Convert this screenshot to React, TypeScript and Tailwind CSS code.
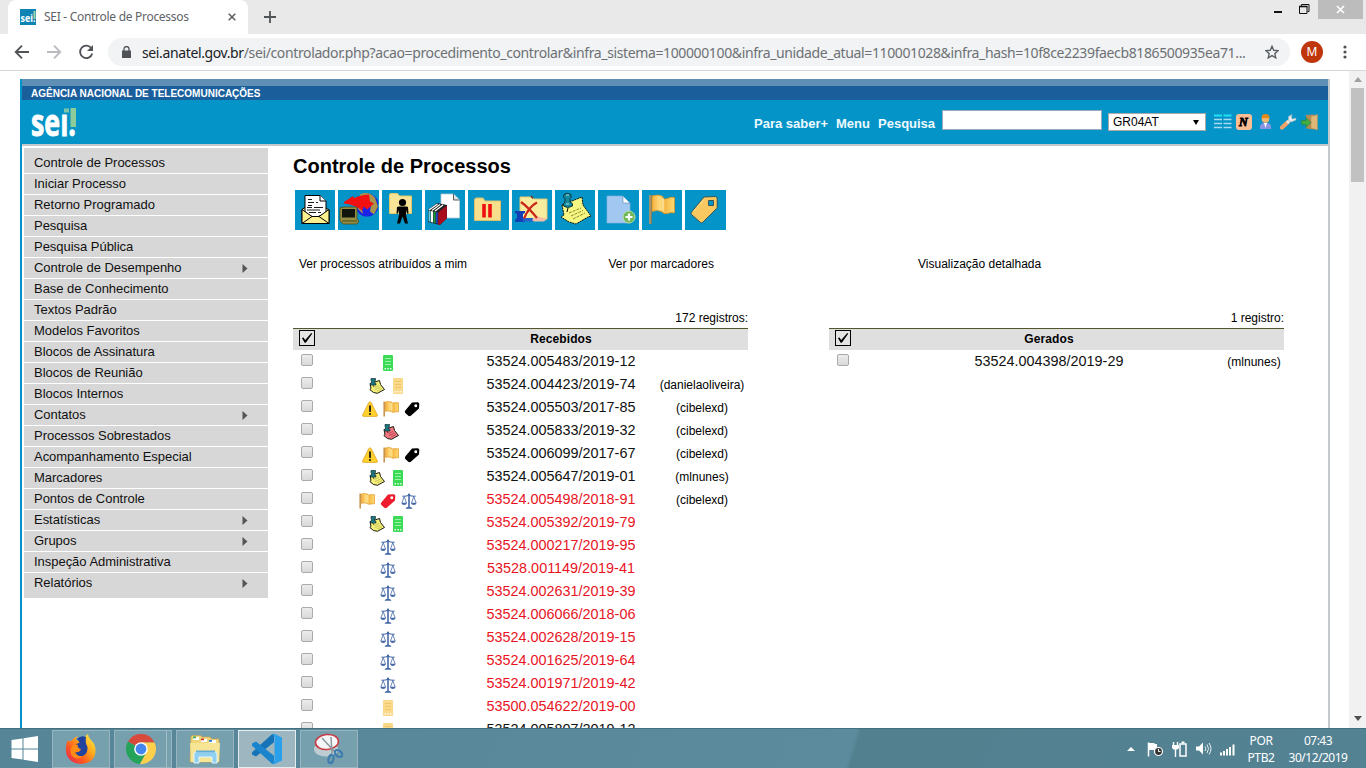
import React from "react";

const MENU: [string, boolean?][] = [
  ["Controle de Processos"],
  ["Iniciar Processo"],
  ["Retorno Programado"],
  ["Pesquisa"],
  ["Pesquisa Pública"],
  ["Controle de Desempenho", true],
  ["Base de Conhecimento"],
  ["Textos Padrão"],
  ["Modelos Favoritos"],
  ["Blocos de Assinatura"],
  ["Blocos de Reunião"],
  ["Blocos Internos"],
  ["Contatos", true],
  ["Processos Sobrestados"],
  ["Acompanhamento Especial"],
  ["Marcadores"],
  ["Pontos de Controle"],
  ["Estatísticas", true],
  ["Grupos", true],
  ["Inspeção Administrativa"],
  ["Relatórios", true],
];

type IconName = "phone" | "phoneY" | "note" | "noteR" | "warn" | "flag" | "tag" | "tagR" | "scale";
type Row = { n: string; icons: IconName[]; user?: string; red?: boolean; shift?: boolean };

const ROWS: Row[] = [
  { n: "53524.005483/2019-12", icons: ["phone"] },
  { n: "53524.004423/2019-74", icons: ["note", "phoneY"], user: "(danielaoliveira)" },
  { n: "53524.005503/2017-85", icons: ["warn", "flag", "tag"], user: "(cibelexd)", shift: true },
  { n: "53524.005833/2019-32", icons: ["noteR"], user: "(cibelexd)", shift: true },
  { n: "53524.006099/2017-67", icons: ["warn", "flag", "tag"], user: "(cibelexd)", shift: true },
  { n: "53524.005647/2019-01", icons: ["note", "phone"], user: "(mlnunes)" },
  { n: "53524.005498/2018-91", icons: ["flag", "tagR", "scale"], user: "(cibelexd)", red: true },
  { n: "53524.005392/2019-79", icons: ["note", "phone"], red: true },
  { n: "53524.000217/2019-95", icons: ["scale"], red: true },
  { n: "53528.001149/2019-41", icons: ["scale"], red: true },
  { n: "53524.002631/2019-39", icons: ["scale"], red: true },
  { n: "53524.006066/2018-06", icons: ["scale"], red: true },
  { n: "53524.002628/2019-15", icons: ["scale"], red: true },
  { n: "53524.001625/2019-64", icons: ["scale"], red: true },
  { n: "53524.001971/2019-42", icons: ["scale"], red: true },
  { n: "53500.054622/2019-00", icons: ["phoneY"], red: true },
  { n: "53524.005807/2019-12", icons: ["phoneY"] },
];

function Phone({ c, d }: { c: string; d: string }) {
  return (
    <svg width="16" height="16" viewBox="0 0 16 16">
      <rect x="3" y="0" width="10" height="16" rx="1" fill={c} />
      <path d="M5 3.500h6M5 6.500h6M5 9.500h6" stroke={d} strokeWidth="1" />
      <path d="M4.500 13h1.500v1.500h-1.500zM7.300 13h1.500v1.500h-1.500zM10 13h1.500v1.500h-1.500z" fill="#fff" opacity=".85" />
    </svg>
  );
}

function Note({ c, line }: { c: string; line: string }) {
  return (
    <svg width="16" height="16" viewBox="0 0 16 16">
      <path d="M1 5.500L10.500 2.500 11.500 6.500 15.500 11.500 13 12.800 8.500 15.300 4.500 14.500 .8 11.500 2 10.500z" fill={c} stroke="#1a1a10" strokeWidth="1" />
      <path d="M5.500 9.500l4.500-2M6 11.500l5.500-2.500M8 13l5-2.500" stroke={line} strokeWidth=".6" />
      <path d="M2 .5h4.500v2L5.500 3v1.500L7 5.500V7H1.500V5.500l1-1V3L2 2.500z" fill="#1d7580" stroke="#0b3035" strokeWidth=".7" />
      <path d="M4 7l1 2" stroke="#222" strokeWidth=".8" />
    </svg>
  );
}

function Tag({ c }: { c: string }) {
  return (
    <svg width="16" height="16" viewBox="0 0 16 16">
      <path fillRule="evenodd" d="M8 1.500l5.500-.3q1.800 0 1.800 1.600L15 7.500 6.800 14.800q-1.300.9-2.500 0L1.300 12q-1-1.300 0-2.500zM11.700 3.200a1.500 1.500 0 1 0 .1 3 1.500 1.500 0 0 0-.1-3z" fill={c} />
    </svg>
  );
}

function Flag() {
  return (
    <svg width="16" height="16" viewBox="0 0 16 16">
      <defs>
        <linearGradient id="fl" x1="0" x2="1">
          <stop offset="0" stopColor="#f5b03c" />
          <stop offset=".35" stopColor="#ffdc80" />
          <stop offset=".6" stopColor="#f6ba48" />
          <stop offset="1" stopColor="#ffdb72" />
        </linearGradient>
      </defs>
      <path d="M1.200.5v15" stroke="#c9954f" strokeWidth="1.600" />
      <path d="M2.500 1q3-1 6 0v1q3.500-.5 7-.2v9q-3.500-.3-5 .5-1.200.3-2.500-1-2.500-.8-5.500 0z" fill="url(#fl)" stroke="#e29f33" strokeWidth=".8" />
      <path d="M8.800 2v7.500" stroke="#fff0b8" strokeWidth=".7" />
    </svg>
  );
}

function Warn() {
  return (
    <svg width="16" height="16" viewBox="0 0 16 16">
      <path d="M8 .8q.8 0 1.300 1L15.400 14q.4 1.300-.8 1.400h-13.200Q.2 15.300.6 14L6.700 1.800Q7.200.8 8 .8z" fill="#ffd02e" stroke="#dfa628" strokeWidth=".8" />
      <path d="M8 5v5.200" stroke="#111" strokeWidth="1.700" strokeLinecap="round" />
      <circle cx="8" cy="12.900" r="1" fill="#111" />
    </svg>
  );
}

function Scale() {
  return (
    <svg width="16" height="16" viewBox="0 0 16 16" fill="none" stroke="#4468a6">
      <path d="M1.500 3.200Q5 3.500 8 2.200q3 1.300 6.500 1" strokeWidth="1.200" />
      <path d="M8 1v13" strokeWidth="1.600" />
      <circle cx="8" cy="1.600" r="1.100" fill="#4468a6" stroke="none" />
      <path d="M3.200 3.500L.9 10M3.200 3.500L5.500 10M12.800 3.500L10.500 10M12.800 3.500L15.100 10" strokeWidth=".8" />
      <path d="M.3 9.800h5.800q-.6 2.200-2.900 2.200T.3 9.800zM9.900 9.800h5.800q-.6 2.200-2.900 2.200T9.900 9.800zM4.500 15.700q.5-1.700 3.500-1.900 3 .2 3.500 1.900z" fill="#4468a6" stroke="none" />
    </svg>
  );
}

function RowIcon({ name }: { name: IconName }) {
  switch (name) {
    case "phone": return <Phone c="#3cdb55" d="#9df2a8" />;
    case "phoneY": return <Phone c="#fbd98a" d="#f1c56a" />;
    case "note": return <Note c="#f3ee78" line="#b3ad48" />;
    case "noteR": return <Note c="#f27884" line="#8e2833" />;
    case "warn": return <Warn />;
    case "flag": return <Flag />;
    case "tag": return <Tag c="#000" />;
    case "tagR": return <Tag c="#ec1c2c" />;
    case "scale": return <Scale />;
  }
}

const TOOLS: { w: string; art: React.ReactNode }[] = [
  {
    w: "w-[40px] mr-[3px]",
    art: (
      <>
        <path d="M7 19.500l5-3.500h16l6 4v13.500H7z" fill="#fbf08f" stroke="#000" />
        <path d="M10 23V5.500h15l6 5.500v12L20 28z" fill="#fff" stroke="#000" />
        <path d="M25 5.500V11h6" fill="#fff" stroke="#000" />
        <path d="M13 9.500h4M13 12.500h6m2 0h2M13 15.500h4M12 17.500h5m2 0h9M12 20h13M14 22.500h7m2 0h3" stroke="#000" strokeWidth=".9" />
        <path d="M7 19.500l10 7h7l10-7v14H7z" fill="#fbf08f" stroke="#000" />
        <path d="M7 33.500l10-7m17 7l-10-7" stroke="#000" />
      </>
    ),
  },
  {
    w: "w-[41px] mr-[3px]",
    art: (
      <>
        <circle cx="29" cy="15" r="11.500" fill="#1c22e8" />
        <path d="M22 4.500q8-4 15 3l3 9-4 8-4-3 1-6-4-6-7-1zM18 12l5 3 2 9-5-5z" fill="#a9924a" />
        <path d="M6 12l9-6 1 2q6-3 15-3.500l1 7 4 2-7 6-3-3-2 4q-8-6-18-7z" fill="#f31010" />
        <path d="M2 18l4-1h13v12l2 2-2 3H5l-3-3z" fill="#948e42" stroke="#4b491c" strokeWidth=".8" />
        <path d="M4 19h13v8.500H4z" fill="#11140c" />
        <path d="M4 31h15" stroke="#4b491c" />
      </>
    ),
  },
  {
    w: "w-[40px] mr-[3px]",
    art: (
      <>
        <path d="M7.500 5q0-1.500 1.500-1.500h6.500l2 2.500h12v17.500h-22z" fill="#f8e496" stroke="#e2c667" />
        <circle cx="20.500" cy="12.500" r="3.600" fill="#000" />
        <path d="M15 17l1.500-.5h8L26 17l.5 6.500h-1.500L24 20v5l2 8.500h-3l-2.500-7-2.500 7h-3l2-8.500v-5l-1 3.500h-1.500z" fill="#000" />
      </>
    ),
  },
  {
    w: "w-[40px] mr-[3px]",
    art: (
      <>
        <path d="M16 4h12.500l6 6v18H16z" fill="#fff" stroke="#b6cad3" strokeWidth=".8" />
        <path d="M28.500 4v6h6" fill="#dce3e6" stroke="#333" strokeWidth=".8" />
        <path d="M3 20l9-7 10 2v13l-7 7-12-3z" fill="#222" />
        <path d="M3.500 20.500l2 .4v11l-2-.6z" fill="#55d3ef" />
        <path d="M6 21l2 .4v11l-2-.5z" fill="#fff" />
        <path d="M8.500 21.500l2 .3v11.500l-2-.6z" fill="#1a9d44" />
        <path d="M11 22l1.800.3v11.500l-1.800-.5z" fill="#283ebc" />
        <path d="M13.300 22.500l8.500-7v13l-7 6.500-1.500-.500z" fill="#a90d1d" />
        <path d="M4 20l8.500-6M7 20.500l8-6M10 21l8-6" stroke="#fff" strokeWidth="1.200" />
      </>
    ),
  },
  {
    w: "w-[41px] mr-[3px]",
    art: (
      <>
        <path d="M6.500 10q0-2 2-2H15l2 3h15.500v19.500h-26z" fill="#f7df8b" stroke="#dcc16a" />
        <path d="M16 14v13.500M22 14v13.500" stroke="#ee1010" strokeWidth="3.600" />
      </>
    ),
  },
  {
    w: "w-[40px] mr-[3px]",
    art: (
      <>
        <path d="M8 7h12l2 2h13v20H8z" fill="#f8ec9e" stroke="#dfc978" />
        <path d="M19 6l2 2.500" stroke="#732d1d" strokeWidth="1.500" />
        <path d="M3 21h10v2l-2 1v4l2 2v2H3v-2l2-2v-4l-2-1z" fill="#1340b5" />
        <path d="M11 28h10v3.500H11z" fill="#2461cc" />
        <path d="M20 30l4-4 11 3-3 2.500H22z" fill="#f3bda7" />
        <path d="M9 12q7 5 16 16M25 12.500q-8 4-13 16" stroke="#c9261a" strokeWidth="2.200" fill="none" />
      </>
    ),
  },
  {
    w: "w-[40px] mr-[3px]",
    art: (
      <>
        <path d="M7 15L27 7l1 8 8 11-3 1-12 7-7-2-8-5 3-2z" fill="#f6f783" stroke="#000" strokeWidth=".9" strokeDasharray="2 .7" />
        <path d="M14 23l12-5M16 26l12-5.500M18 29l12-6" stroke="#8a8b2c" strokeDasharray="3 1" />
        <path d="M9 4.500q3-2.500 7 0v3l-1 1v3.500q3.500 1 2.500 4-5 3-9 0-1-3 1.500-4V8.500L8.500 7z" fill="#188a9d" stroke="#07333c" />
        <path d="M13 18l-1 4" stroke="#000" />
        <path d="M11 5h3M11 14h3" stroke="#98e2e8" />
      </>
    ),
  },
  {
    w: "w-[41px] mr-[3px]",
    art: (
      <>
        <path d="M9 6h16l7 7v20H9z" fill="#a2c8f1" stroke="#86b2e2" strokeWidth=".7" />
        <path d="M25 6v7h7z" fill="#fff" stroke="#5585b8" strokeWidth=".6" />
        <circle cx="31" cy="27" r="6" fill="#71b855" stroke="#b9dca7" strokeWidth="1" />
        <path d="M31 23.500v7M27.500 27h7" stroke="#fff" strokeWidth="2.200" />
      </>
    ),
  },
  {
    w: "w-[40px] mr-[3px]",
    art: (
      <>
        <path d="M8.500 5v29" stroke="#8a7752" strokeWidth="2.600" />
        <path d="M8 5v29" stroke="#c4ad7d" strokeWidth="1" />
        <path d="M10 6q6-2 11 .5v2q2 1 4.500 0 3.500-2 7-1V23q-3.500-1-7 .5-3.500 1-6-2-4-2-9.500 0z" fill="url(#fl)" stroke="#d9931e" strokeWidth=".8" />
        <path d="M21 8v12.500" stroke="#fff0b8" strokeWidth="1" />
      </>
    ),
  },
  {
    w: "w-[41px]",
    art: (
      <>
        <path fillRule="evenodd" d="M19 7L30.500 6.500l1.700 1.500V18L17.500 32.500q-1 .7-2 0L6.500 24.500q-1-1.300 0-2.500zM23.500 10.500h5v5h-5z" fill="#f9c860" stroke="#2c4b55" strokeWidth=".9" />
        <path d="M19 9.500l-10.500 12" stroke="#ffdf93" />
      </>
    ),
  },
];

function Checkbox() {
  return <span className="h-[12px] w-[12px] rounded-[2px] border border-[#aaaaaa] bg-linear-to-b from-[#ececec] to-[#d9d9d9]" />;
}

function HeadCheck() {
  return (
    <svg width="16" height="16" viewBox="0 0 16 16">
      <rect x=".5" y=".5" width="15" height="15" fill="#e4e4e4" stroke="#000" />
      <path d="M3 8.300l1.200-1 2 2.700L12.300 3l.9.700L6.800 12.700H5.700z" fill="#000" />
    </svg>
  );
}

function TaskButton({ active, stacked, children }: { active?: boolean; stacked?: boolean; children: React.ReactNode }) {
  return (
    <div
      className={
        "mr-[4px] flex h-[38px] w-[58px] items-center border " +
        (active ? "border-[#e4edf0] bg-[#9db6bf]" : "border-[#98b5bf] bg-[#76a0ae]")
      }
    >
      <div className={"flex h-full items-center justify-center " + (stacked ? "w-[52px] border-r border-[#a5bfc8]" : "w-full")}>{children}</div>
    </div>
  );
}

function Firefox() {
  return (
    <svg width="32" height="32" viewBox="0 0 32 32">
      <defs>
        <linearGradient id="ff" x1="1" y1="0" x2="0" y2="1">
          <stop offset="0" stopColor="#fff14f" />
          <stop offset=".35" stopColor="#ffb01f" />
          <stop offset=".65" stopColor="#ff5a1f" />
          <stop offset="1" stopColor="#e5195f" />
        </linearGradient>
      </defs>
      <path d="M3 7q1 2 3 1 3-4 7-5-2 2-2 4 6 0 7 3 0-6 5-9 0 3 3 6 5 5 4.500 11Q30 30 16 31 3 30 1 19 .5 12 3 7z" fill="url(#ff)" />
      <path d="M12 6q4-4 9-2-1 6 1.500 10 .5 7-5 9-6 1-8-4 4 1 6-2-5 0-5-4 1-3 4-3-1-3-2.500-4z" fill="#20439d" />
      <path d="M7 13q3-2 6-1-1 3 3 4-2 4-6 3 2 5 8 4-6 5-11 0-3-5 0-10z" fill="#ff8a16" />
    </svg>
  );
}

function Chrome() {
  return (
    <svg width="30" height="30" viewBox="0 0 30 30">
      <path d="M15 15L2 7.500A15 15 0 0 1 28 7.500L28.500 8.500H15z" fill="#d94a3d" />
      <path d="M2 7.500A15 15 0 0 0 14 30l6.500-11.800L15 15z" fill="#25a35a" />
      <path d="M28.500 8.500A15 15 0 0 1 14 30l6.500-11.800L15 8.500z" fill="#fcd04b" />
      <circle cx="15" cy="15" r="6.800" fill="#fff" />
      <circle cx="15" cy="15" r="5.400" fill="#4585ee" />
    </svg>
  );
}

function Explorer() {
  return (
    <svg width="34" height="30" viewBox="0 0 34 30">
      <path d="M3 3q0-1.500 1.500-1.500h8L14 3h8l1.500 2H31v23H2z" fill="#f0d67a" stroke="#c6a54c" strokeWidth=".7" />
      <path d="M5 3h6v3H5zM13 5h6v3h-6zM21 6h7v3h-7z" fill="#fff" />
      <path d="M5 2.500h3v1.800H5z" fill="#34a853" />
      <path d="M13 4.500h3v1.800h-3z" fill="#cf3e30" />
      <path d="M21 6h3v1.800h-3z" fill="#3178c6" />
      <path d="M2 9h30l-1 19H3z" fill="#f7e596" />
      <path d="M6 29v-9q0-2 2-2h19q2 0 2 2v9h-5v-6H11v6z" fill="#8fd0f0" stroke="#e3f5fd" />
      <path d="M8 17.500h19" stroke="#62aed6" strokeWidth="2" />
    </svg>
  );
}

function VsCode() {
  return (
    <svg width="32" height="32" viewBox="0 0 32 32">
      <path d="M23 .8v8.500L5 23.500 1 21.500v-2.200L21 1.200z" fill="#1673b8" />
      <path d="M23 31.200v-8.500L5 8.500 1 10.500v2.200L21 30.800z" fill="#1a84cd" />
      <path d="M23 .8L31 4.500v23l-8 3.700-1.500-.5L23.500 28V4l-2-2.700z" fill="#2ba0ea" />
    </svg>
  );
}

function Snip() {
  return (
    <svg width="32" height="32" viewBox="0 0 32 32">
      <ellipse cx="14" cy="14" rx="12" ry="7.500" fill="#bfcdd3" transform="translate(-1 2)" />
      <ellipse cx="14" cy="9" rx="11.500" ry="7.500" fill="#f4f6f7" stroke="#c93a42" strokeWidth="1.600" transform="rotate(-6 14 9)" />
      <path d="M9 5l13 14M18 4l1 17" stroke="#8b989e" strokeWidth="1.500" />
      <ellipse cx="25.500" cy="20.500" rx="4.200" ry="2.800" fill="none" stroke="#3d7cae" strokeWidth="2.200" transform="rotate(40 25.500 20.500)" />
      <ellipse cx="18" cy="26" rx="2.400" ry="4.200" fill="none" stroke="#3d7cae" strokeWidth="2.200" transform="rotate(15 18 26)" />
    </svg>
  );
}

function Browser() {
  return (
    <header className="h-[71px] shrink-0 border-b border-[#d3d6da] bg-white font-['Noto_Sans',sans-serif]">
      <div className="flex h-[34px] bg-[#e9e9e9]">
        <div className="ml-[8px] flex h-[34px] w-[240px] items-center rounded-t-[8px] bg-white pl-[12px]">
          <svg className="shrink-0 overflow-visible" width="16" height="16" viewBox="0 0 16 16">
            <rect width="16" height="16" fill="#0f84b4" />
            <text x=".5" y="12.500" fontFamily="Open Sans" fontWeight="700" fontSize="11" fill="#fff" textLength="15" lengthAdjust="spacingAndGlyphs">sei.</text>
            <path d="M13.500 2h2v8h-2z" fill="#9fd3a8" />
          </svg>
          <span className="ml-[8px] w-[176px] text-[12px] tracking-[-0.29px] whitespace-nowrap text-[#5f6368]">SEI - Controle de Processos</span>
          <svg className="ml-[8px]" width="8" height="8" viewBox="0 0 9 9">
            <path d="M.8.8l7.400 7.400M8.200.8L.8 8.200" stroke="#5a5e63" strokeWidth="1.700" />
          </svg>
        </div>
        <svg className="mt-[11px] ml-[16px]" width="12" height="12" viewBox="0 0 12 12">
          <path d="M6 0v12M0 6h12" stroke="#505357" strokeWidth="1.800" />
        </svg>
        <div className="ml-auto flex pr-[3px]">
          <svg width="40" height="20" viewBox="0 0 40 20">
            <path d="M0 11h8v2H0z" fill="#111" />
            <path d="M27.500 6V4.500h7.500v7h-1.500M25.500 6.500h7.500v7h-7.500z" fill="none" stroke="#111" strokeWidth="1" />
            <path d="M25 6.500h8.500" stroke="#111" strokeWidth="1.600" />
          </svg>
          <div className="ml-[4px] flex h-[19px] w-[45px] items-center justify-center bg-[#bcbcbc]">
            <svg width="9" height="9" viewBox="0 0 9 9">
              <path d="M1 1l7 7M8 1L1 8" stroke="#fff" strokeWidth="1.700" />
            </svg>
          </div>
        </div>
      </div>
      <div className="flex h-[36px] items-center pl-[14px]">
        <svg className="shrink-0" width="80" height="16" viewBox="0 0 80 16" fill="none" strokeWidth="1.800">
          <path d="M15 8H2M8 1.700L1.700 8 8 14.300" stroke="#505357" />
          <path d="M33 8h13M40 1.700L46.300 8 40 14.300" stroke="#b9bbbe" />
          <path d="M77.500 4.500A6.200 6.200 0 1 0 78.300 9.500" stroke="#505357" />
          <path d="M79 1v6h-6z" fill="#505357" />
        </svg>
        <div className="ml-[14px] flex h-[28px] w-[1182px] shrink-0 items-center rounded-full bg-[#f1f3f4] pl-[14px]">
          <svg className="shrink-0" width="9" height="12" viewBox="0 0 9 12">
            <path d="M0 4.500h9V12H0z" fill="#4f5357" />
            <path d="M2 5V3a2.500 2.500 0 0 1 5 0v2" fill="none" stroke="#4f5357" strokeWidth="1.300" />
          </svg>
          <span className="ml-[11px] w-[1110px] shrink-0 text-[14px] tracking-[-0.375px] whitespace-nowrap text-[#6d7175]">
            <span className="text-[#202124]">sei.anatel.gov.br</span>/sei/controlador.php?acao=procedimento_controlar&amp;infra_sistema=100000100&amp;infra_unidade_atual=110001028&amp;infra_hash=10f8ce2239faecb8186500935ea71...
          </span>
          <svg className="ml-[13px] shrink-0" width="14" height="14" viewBox="0 0 14 14">
            <path d="M7 1.200l1.700 4.100 4.400.4-3.300 2.900 1 4.300L7 10.600l-3.800 2.300 1-4.300L.9 5.700l4.400-.4z" fill="none" stroke="#5f6368" strokeWidth="1.400" />
          </svg>
        </div>
        <div className="ml-[11px] flex h-[22px] w-[22px] items-center justify-center rounded-full bg-[#bf360c] text-[12px] text-white">M</div>
        <svg className="ml-[20px]" width="4" height="14" viewBox="0 0 4 14" fill="#505357">
          <circle cx="2" cy="2" r="1.600" />
          <circle cx="2" cy="7" r="1.600" />
          <circle cx="2" cy="12" r="1.600" />
        </svg>
      </div>
    </header>
  );
}

function SiteHeader() {
  return (
    <div className="h-[67px] shrink-0 border-b-2 border-[#c3c9cc] bg-[#0494c7]">
      <div className="h-[7px] bg-[#5f8fb5]" />
      <div className="h-[14px] bg-[#1a5f9c] pt-[1px] pl-[9px] text-[10px] leading-[14px] font-bold whitespace-nowrap text-white">
        AGÊNCIA NACIONAL DE TELECOMUNICAÇÕES
      </div>
      <div className="flex h-[44px] items-start pl-[9px]">
        <svg className="mt-[6px] overflow-visible" width="48" height="32" viewBox="0 0 48 32">
          <text x="0" y="30" fontFamily="Open Sans" fontWeight="700" fontSize="38" fill="#fff" stroke="#fff" strokeWidth=".9" textLength="45" lengthAdjust="spacingAndGlyphs">sei.</text>
          <path d="M30 -3h9v10h-9z" fill="#0494c7" />
          <path d="M33 2.500h5v4h-5z" fill="#7cc6ae" />
          <path d="M39.500 2h5.500v19h-5.500z" fill="#8ecb9a" />
        </svg>
        <div className="mt-[15px] ml-auto flex gap-[8px] text-[13px] leading-[18px] font-bold whitespace-nowrap text-[#eefaff]">
          <span className="w-[74px]">Para saber+</span>
          <span className="w-[34px]">Menu</span>
          <span className="w-[56px]">Pesquisa</span>
        </div>
        <div className="mt-[10px] ml-[8px] h-[20px] w-[160px] border border-[#9ab] bg-white" />
        <div className="mt-[13px] ml-[6px] flex h-[18px] w-[98px] items-center border border-[#a9a9a9] bg-white pl-[4px] text-[12px] text-black">
          GR04AT
          <svg className="mr-[6px] ml-auto" width="6" height="7" viewBox="0 0 7 7"><path d="M0 .5h7L3.500 6.500z" /></svg>
        </div>
        <svg className="mt-[13px] mr-[8px] ml-[7px]" width="107" height="18" viewBox="0 0 107 18">
          <path d="M1 2.500h8M10.500 2.500h8" stroke="#25e0f5" strokeWidth="2" />
          <path d="M1 6.500h8M10.500 6.500h8M1 10.500h8M10.500 10.500h8M1 14.500h8M10.500 14.500h8" stroke="#a9d9ee" strokeWidth="1.700" />
          <rect x="23" y="1" width="16" height="16" rx="3" fill="#fbbd92" />
          <text x="26" y="13" fontFamily="Liberation Serif" fontWeight="700" fontStyle="italic" fontSize="12" fill="#000" stroke="#000" strokeWidth=".8">N</text>
          <path d="M47 16v-3q1-3.500 5.500-3.500T58 13v3z" fill="#8794e4" />
          <path d="M51 10h3l-1.500 5z" fill="#fff" />
          <circle cx="52.500" cy="6" r="3.800" fill="#f4b56c" />
          <path d="M48.500 5q0-4 4-4t4 4z" fill="#e48a17" />
          <path d="M69 14.500l6-5.500" stroke="#f6a267" strokeWidth="4.200" strokeLinecap="round" />
          <path d="M74 10l3-3" stroke="#dbe4e8" strokeWidth="3" />
          <path d="M79 1.500l-3.500 2v4l3 1.500 4.500-2-.2-2-3.300 1-1-1.500z" fill="#e3eaee" stroke="#9cabb2" strokeWidth=".5" />
          <path d="M93 2l8-.5v15l-8-1z" fill="#b58b55" />
          <path d="M98 3.500l6.500-2v15.500l-6.500-2z" fill="#e0b776" stroke="#b48c50" strokeWidth=".5" />
          <path d="M88.500 7.500h4.500V4.500l5 5-5 5v-3h-4.500z" fill="#43ad45" stroke="#287b39" strokeWidth=".6" />
        </svg>
      </div>
    </div>
  );
}

function Sidebar() {
  return (
    <nav className="mt-[2px] ml-[2px] w-[244px] shrink-0 text-[13px] tracking-[-0.03px] text-[#111]">
      <div className="h-[5px] bg-[#d7d7d7]" />
      {MENU.map(([label, sub]) => (
        <div key={label} className="flex h-[21px] items-center border-b border-white bg-[#d7d7d7] pl-[10px] leading-[20px] last:h-[25px] last:border-0 last:pb-[5px]">
          {label}
          {sub && (
            <svg className="mr-[20px] ml-auto" width="6" height="9" viewBox="0 0 6 9">
              <path d="M.5 0l5 4.500-5 4.500z" fill="#555" />
            </svg>
          )}
        </div>
      ))}
    </nav>
  );
}

function TableHead({ count, title, titlePad }: { count: string; title: string; titlePad: string }) {
  return (
    <>
      <div className="flex h-[19px] items-center justify-end pb-[2px] text-[12px]">{count}</div>
      <div className="flex h-[22px] items-center border-t border-[#55552a] bg-[#dfdfdf] pb-[3px] pl-[6px] text-[12px] font-bold">
        <HeadCheck />
        <span className={"flex w-[190px] justify-center pt-[1px] tracking-[0.1px] " + titlePad}>{title}</span>
      </div>
    </>
  );
}

export default function App() {
  return (
    <div className="flex h-[768px] w-[1366px] flex-col overflow-hidden bg-white font-['Liberation_Sans',Arial,sans-serif] text-black">
      <Browser />
      <div className="flex h-[657px] shrink-0 overflow-hidden">
        <div className="mt-[8px] ml-[20px] flex h-[649px] w-[1310px] flex-col overflow-hidden border-r-2 border-l-2 border-r-[#c3c9cc] border-l-[#0494c7]">
          <SiteHeader />
          <div className="flex">
            <Sidebar />
            <main className="ml-[25px] w-[1000px]">
              <h1 className="mt-[8px] h-[24px] text-[20px] leading-[24px] font-bold whitespace-nowrap">Controle de Processos</h1>
              <div className="mt-[12px] ml-[2px] flex">
                {TOOLS.map((t, i) => (
                  <div key={i} className={"h-[40px] bg-[#0494c7] " + t.w}>
                    <svg width="40" height="40" viewBox="0 0 40 40" fill="none">{t.art}</svg>
                  </div>
                ))}
              </div>
              <div className="mt-[26px] ml-[6px] flex h-[16px] text-[12px] leading-[16px]">
                <span className="w-[309.500px]">Ver processos atribuídos a mim</span>
                <span className="w-[309.500px]">Ver por marcadores</span>
                <span>Visualização detalhada</span>
              </div>
              <div className="mt-[37px] flex gap-[81px]">
                <section className="w-[455px]">
                  <TableHead count="172 registros:" title="Recebidos" titlePad="ml-[151px]" />
                  {ROWS.map((r) => (
                    <div key={r.n} className="flex h-[23px] items-center">
                      <div className="flex w-[28px] justify-center pb-[4px]"><Checkbox /></div>
                      <div className={"mr-[11px] flex w-[134px] justify-center gap-[5px] pt-[3px] " + (r.shift ? "pl-[6px]" : r.icons.length === 2 ? "pr-[2px]" : "")}>
                        {r.icons.map((ic, k) => <RowIcon key={k} name={ic} />)}
                      </div>
                      <div className={"w-[190px] text-center text-[14.400px] " + (r.red ? "text-[#e8141f]" : "text-[#111]")}>{r.n}</div>
                      <div className="w-[92px] pt-[1px] text-center text-[12px]">{r.user}</div>
                    </div>
                  ))}
                </section>
                <section className="w-[455px]">
                  <TableHead count="1 registro:" title="Gerados" titlePad="ml-[103px]" />
                  <div className="flex h-[23px] items-center">
                    <div className="flex w-[28px] justify-center pb-[4px]"><Checkbox /></div>
                    <div className="ml-[97px] w-[190px] text-center text-[14.400px] text-[#111]">53524.004398/2019-29</div>
                    <div className="ml-auto w-[60px] pt-[1px] text-center text-[12px]">(mlnunes)</div>
                  </div>
                </section>
              </div>
            </main>
          </div>
        </div>
        <div className="ml-auto flex w-[17px] flex-col items-center bg-[#f1f1f1]">
          <svg className="mt-[6px] shrink-0" width="8" height="5" viewBox="0 0 8 5"><path d="M0 5h8L4 0z" fill="#a0a0a0" /></svg>
          <div className="mt-[6px] h-[94px] w-[13px] bg-[#c1c1c1]" />
          <svg className="mt-auto mb-[7px]" width="8" height="5" viewBox="0 0 8 5"><path d="M0 0h8L4 5z" fill="#505050" /></svg>
        </div>
      </div>
      <footer className="flex h-[40px] shrink-0 items-center border-t border-[#456f7e] bg-[linear-gradient(107deg,#558596_0,#5b8b9c_820px,#52808f_824px,#538293_100%)] font-['Noto_Sans',sans-serif] text-white">
        <svg className="mr-[13px] ml-[11px]" width="28" height="26" viewBox="0 0 28 26" fill="#fff">
          <path d="M.5 4L11.500 2.400v10H.5zM12.500 2.200L27 0v12.400H12.500zM.5 13.500h11v10L.5 22zM12.500 13.500H27V26l-14.500-2.200z" />
        </svg>
        <TaskButton><Firefox /></TaskButton>
        <TaskButton stacked><Chrome /></TaskButton>
        <TaskButton><Explorer /></TaskButton>
        <TaskButton active><VsCode /></TaskButton>
        <TaskButton><Snip /></TaskButton>
        <svg className="ml-auto" width="110" height="20" viewBox="0 0 110 20" fill="none">
          <path d="M0 12h8L4 8z" fill="#fff" />
          <path d="M21.500 3.500v14" stroke="#fff" strokeWidth="1.500" />
          <path d="M22 4h5l1 1h2v6h-8z" fill="#fff" />
          <circle cx="31.500" cy="12.500" r="4" fill="#333" stroke="#fff" strokeWidth="1.200" />
          <path d="M31.500 10V12.500h2" stroke="#fff" />
          <path d="M46.500 3v3M50.500 3v3M48.500 9v9" stroke="#fff" strokeWidth="1.400" />
          <path d="M45 6h7v3l-1.500 1.500h-4L45 9z" fill="#fff" />
          <rect x="53" y="5" width="6" height="12" stroke="#fff" strokeWidth="1.500" />
          <path d="M54.500 3.500h3" stroke="#fff" strokeWidth="2" />
          <path d="M69 7.500h3l4-4v12l-4-4h-3z" fill="#fff" />
          <path d="M78 7.500q1.500 2 0 4.500M80 5.500q3 4 0 8.500M82 4q4 6 0 11.500" stroke="#e9f2f5" />
          <path d="M94 13.500v3M97 12v4.500M100 10v6.500M103 8v8.500M106.500 5.500v11" stroke="#fff" strokeWidth="2" />
        </svg>
        <div className="ml-[10px] w-[28px] text-center text-[12px] leading-[17px] whitespace-nowrap">
          <div className="tracking-[-0.4px]">POR</div>
          <div className="tracking-[-0.4px]">PTB2</div>
        </div>
        <div className="mr-[18px] ml-[13px] w-[60px] text-center text-[12px] leading-[17px] tracking-[-0.5px] whitespace-nowrap">
          <div>07:43</div>
          <div>30/12/2019</div>
        </div>
      </footer>
    </div>
  );
}
